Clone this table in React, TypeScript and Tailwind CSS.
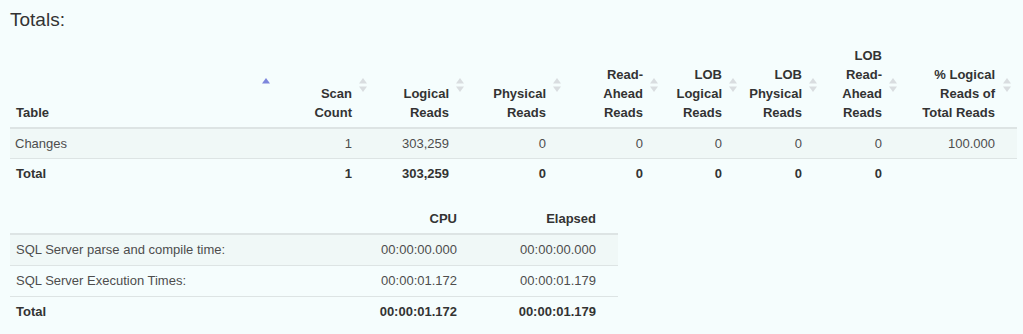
import React from "react";

const SortBoth = ({ right }: { right: number }) => (
  <svg className="absolute top-[42px]" style={{ right }} width="8" height="14" viewBox="0 0 8 14">
    <path d="M4 0 L8 5.5 L0 5.5 Z" fill="#d9dde0" />
    <path d="M4 14 L8 8.5 L0 8.5 Z" fill="#d9dde0" />
  </svg>
);

const SortAsc = () => (
  <svg className="absolute right-[4px] top-[42px]" width="8" height="14" viewBox="0 0 8 14">
    <path d="M4 0 L8 5.5 L0 5.5 Z" fill="#7d86dc" />
  </svg>
);

const headers: { lines: string[]; w: number }[] = [
  { lines: ["Scan", "Count"], w: 97 },
  { lines: ["Logical", "Reads"], w: 97 },
  { lines: ["Physical", "Reads"], w: 97 },
  { lines: ["Read-", "Ahead", "Reads"], w: 97 },
  { lines: ["LOB", "Logical", "Reads"], w: 79 },
  { lines: ["LOB", "Physical", "Reads"], w: 80 },
  { lines: ["LOB", "Read-", "Ahead", "Reads"], w: 80 },
  { lines: ["% Logical", "Reads of", "Total Reads"], w: 116 },
];

const row1 = ["1", "303,259", "0", "0", "0", "0", "0", "100.000"];
const totalRow = ["1", "303,259", "0", "0", "0", "0", "0", ""];

export default function App() {
  return (
    <div
      className="w-[1023px] h-[334px] bg-[#f5fdfd] px-[10px] text-[13px] text-[#4d4d4d]"
      style={{ fontFamily: '"Liberation Sans", Arial, sans-serif' }}
    >
      <div className="h-[36px] pt-[9px] text-[19px] leading-[22px] text-[#333]">Totals:</div>

      <table className="table-fixed border-collapse w-[1007px]">
        <colgroup>
          <col className="w-[264px]" />
          {headers.map((h, i) => (
            <col key={i} style={{ width: h.w }} />
          ))}
        </colgroup>
        <thead>
          <tr className="border-b-2 border-[#dde4e4]">
            <th className="relative align-bottom text-left font-bold text-[#333] pl-[6px] pr-[19px] pt-[10px] pb-[5px] leading-[19px]">
              Table
              <SortAsc />
            </th>
            {headers.map((h, i) => {
              const last = i === headers.length - 1;
              return (
                <th
                  key={i}
                  className={
                    "relative align-bottom text-right font-bold text-[#333] pl-[4px] pt-[10px] pb-[5px] leading-[19px] whitespace-nowrap " +
                    (last ? "pr-[22px]" : "pr-[19px]")
                  }
                >
                  {h.lines.map((l, j) => (
                    <div key={j}>{l}</div>
                  ))}
                  <SortBoth right={last ? 6 : 4} />
                </th>
              );
            })}
          </tr>
        </thead>
        <tbody>
          <tr className="bg-[#f0f8f7] border-b border-[#dde4e4]">
            <td className="h-[30px] pl-[5px] leading-[15px] text-left">Changes</td>
            {row1.map((v, i) => (
              <td
                key={i}
                className={"h-[30px] leading-[15px] text-right " + (i === row1.length - 1 ? "pr-[22px]" : "pr-[19px]")}
              >
                {v}
              </td>
            ))}
          </tr>
          <tr>
            <td className="h-[30px] pl-[6px] leading-[15px] text-left font-bold text-[#333]">Total</td>
            {totalRow.map((v, i) => (
              <td key={i} className="h-[30px] pr-[19px] leading-[15px] text-right font-bold text-[#333]">
                {v}
              </td>
            ))}
          </tr>
        </tbody>
      </table>

      <table className="table-fixed border-collapse w-[608px] mt-[11px]">
        <colgroup>
          <col className="w-[330px]" />
          <col className="w-[139px]" />
          <col className="w-[139px]" />
        </colgroup>
        <thead>
          <tr className="border-b-2 border-[#dde4e4]">
            <th className="pt-[10px] pb-[5px] leading-[19px]"></th>
            <th className="pt-[10px] pb-[5px] pr-[22px] leading-[19px] text-right font-bold text-[#333]">CPU</th>
            <th className="pt-[10px] pb-[5px] pr-[22px] leading-[19px] text-right font-bold text-[#333]">Elapsed</th>
          </tr>
        </thead>
        <tbody>
          <tr className="bg-[#f0f8f7] border-b border-[#dde4e4]">
            <td className="h-[31px] pl-[6px] leading-[15px]">SQL Server parse and compile time:</td>
            <td className="h-[31px] pr-[22px] leading-[15px] text-right">00:00:00.000</td>
            <td className="h-[31px] pr-[22px] leading-[15px] text-right">00:00:00.000</td>
          </tr>
          <tr className="border-b border-[#dde4e4]">
            <td className="h-[31px] pl-[6px] leading-[15px]">SQL Server Execution Times:</td>
            <td className="h-[31px] pr-[22px] leading-[15px] text-right">00:00:01.172</td>
            <td className="h-[31px] pr-[22px] leading-[15px] text-right">00:00:01.179</td>
          </tr>
          <tr>
            <td className="h-[31px] pl-[6px] leading-[15px] font-bold text-[#333]">Total</td>
            <td className="h-[31px] pr-[22px] leading-[15px] text-right font-bold text-[#333]">00:00:01.172</td>
            <td className="h-[31px] pr-[22px] leading-[15px] text-right font-bold text-[#333]">00:00:01.179</td>
          </tr>
        </tbody>
      </table>
    </div>
  );
}
